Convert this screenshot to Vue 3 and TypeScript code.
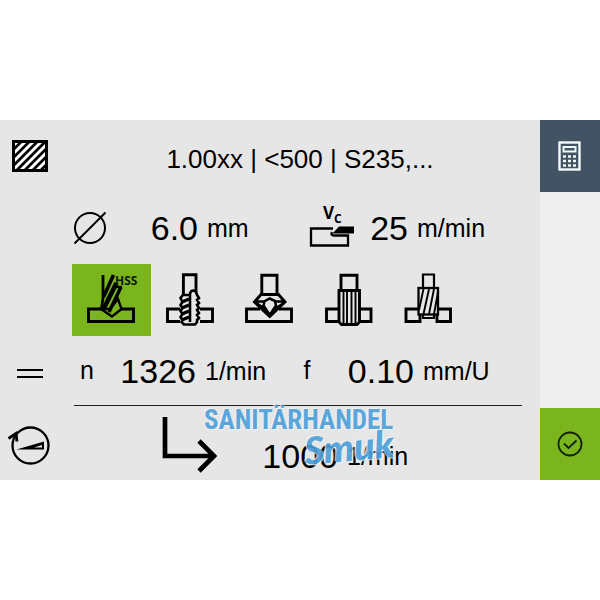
<script setup lang="ts">
import { ref } from 'vue'

type Tool = 'drill' | 'tap' | 'countersink' | 'reamer' | 'mill'

const tools: { id: Tool; label: string }[] = [
  { id: 'drill', label: 'HSS drill' },
  { id: 'tap', label: 'Tap' },
  { id: 'countersink', label: 'Countersink' },
  { id: 'reamer', label: 'Reamer' },
  { id: 'mill', label: 'End mill' },
]
const selected = ref<Tool>('drill')
</script>

<template>
  <div class="page">
    <div class="device">
      <main class="panel">
        <div class="side">
          <svg width="36" height="32" viewBox="0 0 36 32" aria-hidden="true">
            <rect x="1.500" y="1.500" width="33" height="29" fill="#fff" stroke="#000" stroke-width="3" />
            <path d="M2 9 9 2M2 17 17 2M2 25 25 2M5 30 33 2M13 30 34 9M21 30 34 17M29 30 34 25" stroke="#000" stroke-width="2.700" />
          </svg>
        </div>
        <h1 class="title">1.00xx | &lt;500 | S235,...</h1>

        <div class="side"></div>
        <div class="row inputs">
          <span class="label">
            <svg width="34" height="34" viewBox="0 0 34 34" fill="none" stroke="#000" stroke-width="2" aria-hidden="true">
              <circle cx="17" cy="17" r="15" /><path d="M1.500 32.500 32.500 1.500" />
            </svg>
          </span>
          <span class="value">6.0</span>
          <span class="unit">mm</span>
          <span class="label">
            <svg width="46" height="42" viewBox="0 0 46 42" aria-hidden="true">
              <text class="vc" x="14" y="12" font-size="17">V<tspan dy="4" font-size="12">C</tspan></text>
              <path d="M24 21.500H2V38.500H39V28.500H25Q21.500 28.500 23 25" fill="none" stroke="#000" stroke-width="2.300" />
              <path d="M23.500 26.500 30 19.500H45V26.500Z" fill="#000" />
            </svg>
          </span>
          <span class="value">25</span>
          <span class="unit">m/min</span>
        </div>

        <div class="side"></div>
        <div class="tools">
          <button
            v-for="tool in tools"
            :key="tool.id"
            type="button"
            class="tool"
            :class="{ active: selected === tool.id }"
            :aria-label="tool.label"
            :aria-pressed="selected === tool.id"
            @click="selected = tool.id"
          >
            <svg width="50" height="56" viewBox="0 0 50 56" fill="none" stroke="#000" stroke-width="2.900">
              <g v-if="tool.id === 'drill'">
                <path d="M15 37H1.500V49.500H46.500V37H34" />
                <path d="M14 37 25 44.500 34.500 37 31 27 23 37Z" class="tip" stroke-width="2.400" />
                <path d="M16 3V26L14.500 37" stroke-width="2.800" />
                <path d="M26.500 3 16.500 25" stroke-width="3.600" />
                <path d="M29.500 11 16.500 37" stroke-width="4.600" />
                <path d="M34 15 22 40" stroke-width="3.400" />
                <path d="M28 15H35" stroke-width="2.400" />
                <text class="hss" x="28" y="13" font-size="12">HSS</text>
              </g>
              <g v-else-if="tool.id === 'tap'">
                <path d="M14 37H1.500V49.500H14M34 37H46.500V49.500H34" />
                <path d="M17.400 24V2.800H30V20" />
                <path d="M24 50V23Q24 18.500 27.500 18.500 30.500 19 31 23L33 26 31 28 33 31 31 33 33 36 31 38 33 41 31 43 33 46 31 48 31 50 29 52.500H18L15.500 50 16.500 48 14.500 45 16.500 42 14.500 39 16.500 36 14.500 33 16.500 30 14.500 26 17 23H23" stroke-width="2.600" />
                <path d="M16 30 23 27M16 36 23 33M16 42 23 39M16 48 23 45" stroke-width="3.200" />
              </g>
              <g v-else-if="tool.id === 'countersink'">
                <path d="M15 37H1.500V49.500H46.500V37H34" />
                <path d="M16.800 22V3.200H32V22" />
                <path d="M16 22.500H33.500L40 30 24.700 44.500 9.500 30Z" />
                <path d="M10 29.500H19L24.700 26.500 31 29.500H40M19.500 29.500 18.500 33.500 24.700 43 31 33.500 30 29.500M12 31.500 20 37M38 31.500 30 37" stroke-width="2.500" />
              </g>
              <g v-else-if="tool.id === 'reamer'">
                <path d="M14 37H2.500V49.500H15M36 37H47V49.500H35" />
                <path d="M17 18V3.200H33V18" />
                <path d="M15 18.500H35.500V50L33 52.500H17.500L15 50Z" />
                <path d="M19.500 18V52M23 18V52M27.500 18V52M31.500 18V52" stroke-width="1.900" />
              </g>
              <g v-else>
                <path d="M16 37H3V49.500H17V43M35 37H47.500V49.500H34V43" />
                <path d="M20 16V2.500H31V16M20 43V46H31V43" stroke-width="2.200" />
                <rect x="15.500" y="16" width="19.500" height="26.500" stroke-width="2.300" />
                <path d="M20.500 17 16 38M26 17 20.500 42M31 17 26 42M35 20 31 42" stroke-width="1.900" />
              </g>
            </svg>
          </button>
        </div>

        <div class="side">
          <svg width="26" height="12" viewBox="0 0 26 12" aria-hidden="true">
            <path d="M0 4H26M0 11H26" stroke="#000" stroke-width="2" />
          </svg>
        </div>
        <div class="row results">
          <span class="label">n</span>
          <span class="value">1326</span>
          <span class="unit">1/min</span>
          <span class="label">f</span>
          <span class="value">0.10</span>
          <span class="unit">mm/U</span>
        </div>

        <div class="side">
          <svg width="44" height="42" viewBox="0 0 44 42" fill="none" stroke="#000" stroke-width="2.300" aria-hidden="true">
            <circle cx="22.500" cy="22.500" r="18" />
            <path d="M.5 15.500 8 10.500 9 18.500" stroke-width="2.800" />
            <path d="M8.500 26.500 36 18.500V26.500Z" fill="#000" stroke="none" />
            <path d="M26 24.500 34 22V24.500Z" fill="#e6e6e6" stroke="none" />
          </svg>
        </div>
        <div class="row speed">
          <span class="arrow">
            <svg width="56" height="56" viewBox="0 0 56 56" fill="none" stroke="#000" stroke-width="4.700" aria-hidden="true">
              <path d="M3 1V40H52M37 25 52 40 37 55" />
            </svg>
          </span>
          <span class="value">1000</span>
          <span class="unit">1/min</span>
        </div>

        <div class="brand">
          <span class="brand-top">SANITÄRHANDEL</span>
          <span class="brand-bottom">Smuk</span>
        </div>
      </main>

      <nav class="actions">
        <button type="button" class="action calc" aria-label="Calculator">
          <svg width="24" height="30" viewBox="0 0 24 30" aria-hidden="true">
            <rect x="1.500" y="1.500" width="20" height="27" fill="none" stroke="#f3fbfc" stroke-width="2.400" />
            <rect x="5.500" y="6" width="12" height="4.500" fill="none" stroke="#f3fbfc" stroke-width="2" />
            <path d="M5 15.500H18M5 20H18M5 24.500H18" stroke="#f3fbfc" stroke-width="2.700" stroke-dasharray="3 2" />
          </svg>
        </button>
        <button type="button" class="action confirm" aria-label="Confirm">
          <svg width="26" height="26" viewBox="0 0 26 26" fill="none" stroke="#102000" stroke-width="1.800" aria-hidden="true">
            <circle cx="13" cy="13" r="11.500" /><path d="M7 12.500 11.500 17 19.500 9.500" />
          </svg>
        </button>
      </nav>
    </div>
  </div>
</template>

<style>
body {
  margin: 0;
  background: #fff;
}
</style>

<style scoped>
.page {
  display: flex;
  align-items: center;
  min-height: 100vh;
  font-family: "Liberation Sans", Arial, sans-serif;
  color: #000;
}
.device {
  display: flex;
  width: 100%;
}
.panel {
  position: relative;
  flex: 1;
  min-width: 0;
  display: grid;
  grid-template-columns: 60px minmax(0, 1fr);
  grid-auto-rows: 72px;
  background: #e6e6e6;
}
svg {
  display: block;
  overflow: visible;
}
.side {
  display: flex;
  align-items: center;
  justify-content: center;
}
.title {
  margin: 0;
  padding-top: 6px;
  font-size: 26px;
  font-weight: 400;
  line-height: 66px;
  text-align: center;
  white-space: nowrap;
}
.row {
  display: grid;
  align-items: center;
  white-space: nowrap;
}
.inputs {
  grid-template-columns: 60fr 78fr 104fr 60fr 46fr 132fr;
}
.results {
  grid-template-columns: 26fr 96fr 90fr 42fr 86fr 108fr;
  margin: 0 18px 2px 14px;
  border-bottom: 1px solid #222;
}
.speed {
  grid-template-columns: 180fr 98fr 202fr;
  padding-top: 8px;
}
.label {
  display: flex;
  justify-content: center;
  font-size: 25px;
}
.value {
  font-size: 34px;
  line-height: 40px;
  text-align: right;
}
.unit {
  padding-left: 9px;
  font-size: 25px;
  line-height: 28px;
}
.speed .value,
.speed .unit {
  padding-top: 16px;
}
.arrow {
  display: flex;
  justify-content: flex-end;
  padding: 0 22px 8px 0;
}
.vc {
  font-family: "Open Sans", sans-serif;
  font-weight: 700;
  fill: #000;
}
.hss {
  font-family: "Open Sans", sans-serif;
  font-weight: 700;
  fill: #0c1a00;
  stroke: none;
}
.tools {
  display: flex;
  padding-left: 12px;
}
.tool {
  display: flex;
  flex: 0 0 79px;
  align-items: center;
  justify-content: center;
  padding: 0;
  border: 0;
  background: transparent;
  cursor: pointer;
}
.tool.active {
  background: #7ab51d;
}
.tip {
  fill: #7ab51d;
}
.actions {
  display: flex;
  flex: 0 0 60px;
  flex-direction: column;
  justify-content: space-between;
  background: #efefef;
}
.action {
  display: flex;
  align-items: center;
  justify-content: center;
  height: 72px;
  padding: 0;
  border: 0;
  cursor: pointer;
}
.calc {
  background: #425363;
}
.confirm {
  background: #7ab51d;
}
/* Shop mark laid over the lower rows */
.brand {
  position: absolute;
  left: 204px;
  bottom: 22px;
  display: flex;
  flex-direction: column;
  width: 190px;
  color: #4ba0da;
  opacity: 0.9;
  pointer-events: none;
  text-shadow: 1px 1px 1px #f4f4f4, -1px -1px 1px #f4f4f4;
}
.brand-top {
  font-family: "Liberation Sans Narrow", "Roboto Condensed", Roboto, sans-serif;
  font-size: 27px;
  font-weight: 700;
  line-height: 28px;
  white-space: nowrap;
}
.brand-bottom {
  align-self: flex-end;
  font-family: Lato, sans-serif;
  font-size: 38px;
  font-style: italic;
  font-weight: 900;
  line-height: 24px;
  transform: rotate(-5deg);
}
</style>
